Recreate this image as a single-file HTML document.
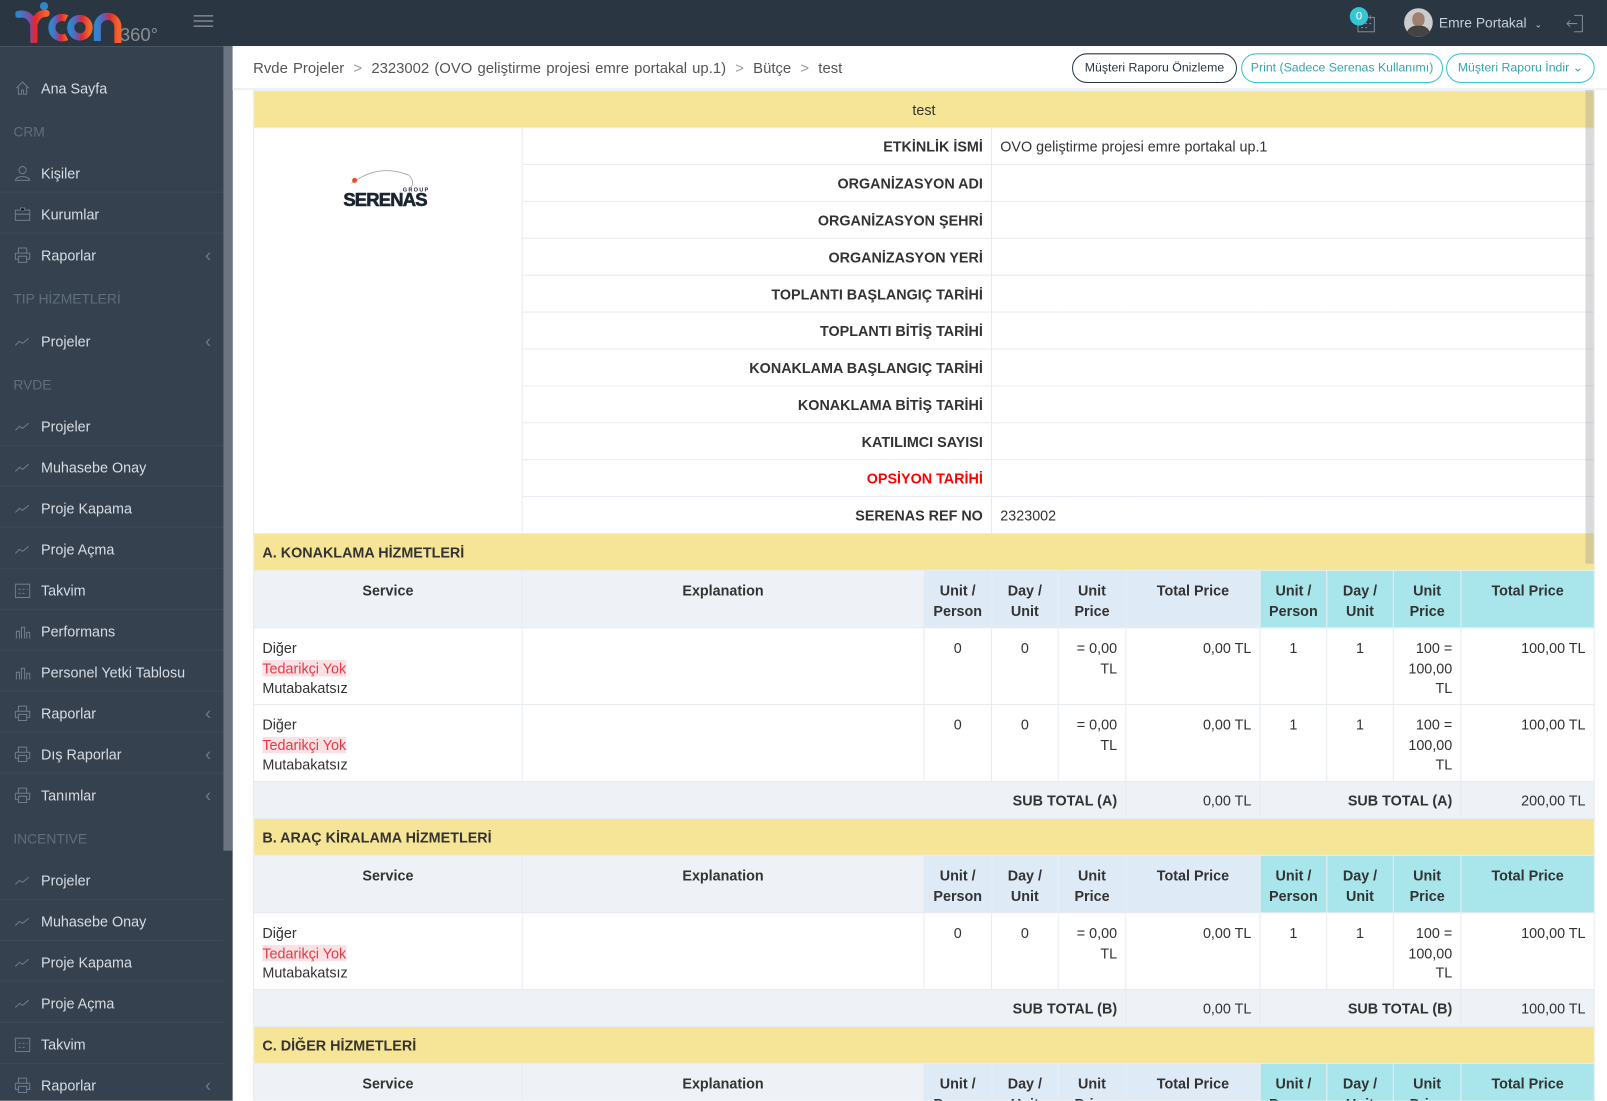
<!DOCTYPE html>
<html><head><meta charset="utf-8">
<style>
*{box-sizing:border-box;margin:0;padding:0}
html,body{width:1607px;height:1100px;overflow:hidden;background:#fff}
#w{position:absolute;left:0;top:0;width:1568px;height:1074px;overflow:hidden;transform:scale(1.02487);transform-origin:0 0;font-family:"Liberation Sans",sans-serif;font-size:13.5px;color:#333;background:#fff}
.top{position:absolute;left:0;top:0;width:1568px;height:45px;background:#2b3643}
.side{position:absolute;left:0;top:45px;width:227px;height:1040px;background:#364150}
.sbar{position:absolute;left:218px;top:45px;width:9px;height:785px;background:#6b7480}
.side .it{position:absolute;left:0;width:218px;height:40px;line-height:42px;color:#d6dce3;font-size:14px;padding-left:40px;border-bottom:1px solid #3d4957}
.side .it svg{position:absolute;left:14px;top:13px}
.side .it .ch{position:absolute;right:12px;top:0;color:#6d7986;font-size:18px}
.side .hd{position:absolute;left:13px;color:#5f6e7d;font-size:13.5px}
.crumb{position:absolute;left:227px;top:45px;width:1341px;height:43px;border-bottom:2px solid #eef1f5;background:#fff}
.crumb .t{position:absolute;left:20px;top:14px;color:#555;font-size:14.5px;word-spacing:1px}
.crumb .t span{color:#999;margin:0 9px}
.btn{position:absolute;top:7px;height:29px;border-radius:15px;border:1px solid #32c5d2;color:#32a5b0;font-size:12px;line-height:27px;text-align:center;background:#fff}
table{position:absolute;left:247px;top:88px;border-collapse:collapse;table-layout:fixed;width:1308px}
td{border:1px solid #e7ecf1;padding:0 8px;vertical-align:top;font-size:14px;line-height:19.5px}
.y td{background:#f7e597;height:36px;vertical-align:middle;font-weight:bold;padding-top:3px}
.inf td{height:36px;vertical-align:middle;padding-top:3px}
.lb{text-align:right;font-weight:bold}
.h td{font-weight:bold;text-align:center;height:56px;padding-top:10px}
.h .g{background:#eef1f5}.h .b{background:#dfeaf7}.h .c{background:#a9e6ec}
.r td{height:75px;padding-top:10px}
.n{text-align:center}.rt{text-align:right}
.red{color:#e43a45;background:#fbe1e3}
.st td{background:#eef1f5;height:36px;vertical-align:middle;text-align:right;padding-top:3px}
.vs{position:absolute;left:1547px;top:88px;width:8px;height:462px;background:rgba(150,150,150,.35)}
</style></head><body><div id="w">
<div class="top">
 <svg style="position:absolute;left:15px;top:2px" width="145" height="40" viewBox="0 0 145 40">
  <defs><linearGradient id="lg" x1="0" x2="1"><stop offset="0" stop-color="#2f86d0"/><stop offset=".4" stop-color="#7b4ea6"/><stop offset=".6" stop-color="#e3262d"/><stop offset="1" stop-color="#f0652a"/></linearGradient></defs>
  <circle cx="28" cy="4" r="4" fill="#2f86d0"/>
  <path d="M3 12 Q14 10 18 22 L18 38 M18 22 Q21 11 30 11" stroke="url(#lg)" stroke-width="7" fill="none" stroke-linecap="round"/>
  <path d="M50 16 A10 10 0 1 0 50 34" stroke="url(#lg)" stroke-width="7" fill="none"/>
  <circle cx="63" cy="25" r="9" stroke="url(#lg)" stroke-width="7" fill="none"/>
  <path d="M80 38 L80 24 A10 10 0 0 1 100 24 L100 40" stroke="url(#lg)" stroke-width="7" fill="none"/>
  <text x="102" y="38" font-family="Liberation Sans" font-size="18" fill="#8a8f96">360°</text>
 </svg>
 <div style="position:absolute;left:189px;top:15px;width:19px;height:1px;background:#aab;box-shadow:0 5px 0 #aab,0 10px 0 #aab"></div>
 <svg style="position:absolute;left:1323px;top:13px" width="20" height="20" viewBox="0 0 20 20"><rect x="2" y="4" width="16" height="14" fill="none" stroke="#7f8b99"/><path d="M6 2v4M14 2v4M5 10h2M9 10h2M13 10h2M5 14h2M9 14h2" stroke="#7f8b99"/></svg>
 <div style="position:absolute;left:1317px;top:7px;width:18px;height:18px;border-radius:9px;background:#36c6d3;color:#fff;font-size:11px;text-align:center;line-height:18px">0</div>
 <div style="position:absolute;left:1370px;top:8px;width:28px;height:28px;border-radius:14px;background:#ccc;overflow:hidden"><div style="margin:4px auto 0;width:12px;height:14px;border-radius:6px;background:#a08070"></div><div style="margin:-1px auto 0;width:24px;height:12px;border-radius:10px 10px 0 0;background:#444"></div></div>
 <div style="position:absolute;left:1404px;top:15px;color:#c6cfda;font-size:13.5px">Emre Portakal <span style="font-size:9px;margin-left:4px">&#8964;</span></div>
 <svg style="position:absolute;left:1527px;top:13px" width="20" height="20" viewBox="0 0 20 20"><path d="M9 2h8v16h-8M2 10h10M5 7l-3 3 3 3" stroke="#7f8b99" fill="none"/></svg>
</div>
<div class="side">
<div class="it" style="top:20px;border:0"><svg width="16" height="16" viewBox="0 0 16 16"><path d="M2 8L8 2l6 6M4 7v7h3v-4h2v4h3V7" stroke="#6f7c8a" fill="none"/></svg>Ana Sayfa</div>
<div class="hd" style="top:76px">CRM</div>
<div class="it" style="top:103px"><svg width="16" height="16"><circle cx="8" cy="5" r="3.5" stroke="#6f7c8a" fill="none"/><path d="M1 15c1-5 13-5 14 0z" stroke="#6f7c8a" fill="none"/></svg>Kişiler</div>
<div class="it" style="top:143px"><svg width="16" height="16"><rect x="1" y="4" width="14" height="10" stroke="#6f7c8a" fill="none"/><path d="M6 4V2h4v2M1 8h14" stroke="#6f7c8a"/></svg>Kurumlar</div>
<div class="it" style="top:183px;border:0"><svg width="16" height="16"><path d="M4 6V1h8v5M1 6h14v6h-3M4 12H1V6M4 9h8v6H4z" stroke="#6f7c8a" fill="none"/></svg>Raporlar<span class="ch">&lsaquo;</span></div>
<div class="hd" style="top:239px">TIP HİZMETLERİ</div>
<div class="it" style="top:267px;border:0"><svg width="16" height="16"><path d="M1 12l4-4 3 2 6-5" stroke="#6f7c8a" fill="none"/></svg>Projeler<span class="ch">&lsaquo;</span></div>
<div class="hd" style="top:323px">RVDE</div>
<div class="it" style="top:350px"><svg width="16" height="16"><path d="M1 12l4-4 3 2 6-5" stroke="#6f7c8a" fill="none"/></svg>Projeler</div>
<div class="it" style="top:390px"><svg width="16" height="16"><path d="M1 12l4-4 3 2 6-5" stroke="#6f7c8a" fill="none"/></svg>Muhasebe Onay</div>
<div class="it" style="top:430px"><svg width="16" height="16"><path d="M1 12l4-4 3 2 6-5" stroke="#6f7c8a" fill="none"/></svg>Proje Kapama</div>
<div class="it" style="top:470px"><svg width="16" height="16"><path d="M1 12l4-4 3 2 6-5" stroke="#6f7c8a" fill="none"/></svg>Proje Açma</div>
<div class="it" style="top:510px"><svg width="16" height="16"><rect x="1" y="2" width="14" height="13" stroke="#6f7c8a" fill="none"/><path d="M4 7h2M8 7h2M12 7h1M4 11h2M8 11h2" stroke="#6f7c8a"/></svg>Takvim</div>
<div class="it" style="top:550px"><svg width="16" height="16"><path d="M2 15V8h3v7M7 15V4h3v11M12 15V9h3v6" stroke="#6f7c8a" fill="none"/></svg>Performans</div>
<div class="it" style="top:590px"><svg width="16" height="16"><path d="M2 15V8h3v7M7 15V4h3v11M12 15V9h3v6" stroke="#6f7c8a" fill="none"/></svg>Personel Yetki Tablosu</div>
<div class="it" style="top:630px"><svg width="16" height="16"><path d="M4 6V1h8v5M1 6h14v6h-3M4 12H1V6M4 9h8v6H4z" stroke="#6f7c8a" fill="none"/></svg>Raporlar<span class="ch">&lsaquo;</span></div>
<div class="it" style="top:670px"><svg width="16" height="16"><path d="M4 6V1h8v5M1 6h14v6h-3M4 12H1V6M4 9h8v6H4z" stroke="#6f7c8a" fill="none"/></svg>Dış Raporlar<span class="ch">&lsaquo;</span></div>
<div class="it" style="top:710px;border:0"><svg width="16" height="16"><path d="M4 6V1h8v5M1 6h14v6h-3M4 12H1V6M4 9h8v6H4z" stroke="#6f7c8a" fill="none"/></svg>Tanımlar<span class="ch">&lsaquo;</span></div>
<div class="hd" style="top:766px">INCENTIVE</div>
<div class="it" style="top:793px"><svg width="16" height="16"><path d="M1 12l4-4 3 2 6-5" stroke="#6f7c8a" fill="none"/></svg>Projeler</div>
<div class="it" style="top:833px"><svg width="16" height="16"><path d="M1 12l4-4 3 2 6-5" stroke="#6f7c8a" fill="none"/></svg>Muhasebe Onay</div>
<div class="it" style="top:873px"><svg width="16" height="16"><path d="M1 12l4-4 3 2 6-5" stroke="#6f7c8a" fill="none"/></svg>Proje Kapama</div>
<div class="it" style="top:913px"><svg width="16" height="16"><path d="M1 12l4-4 3 2 6-5" stroke="#6f7c8a" fill="none"/></svg>Proje Açma</div>
<div class="it" style="top:953px"><svg width="16" height="16"><rect x="1" y="2" width="14" height="13" stroke="#6f7c8a" fill="none"/><path d="M4 7h2M8 7h2M12 7h1M4 11h2M8 11h2" stroke="#6f7c8a"/></svg>Takvim</div>
<div class="it" style="top:993px"><svg width="16" height="16"><path d="M4 6V1h8v5M1 6h14v6h-3M4 12H1V6M4 9h8v6H4z" stroke="#6f7c8a" fill="none"/></svg>Raporlar<span class="ch">&lsaquo;</span></div>
</div>
<div class="sbar"></div>
<div class="crumb">
 <div class="t">Rvde Projeler<span>&gt;</span>2323002 (OVO geliştirme projesi emre portakal up.1)<span>&gt;</span>Bütçe<span>&gt;</span>test</div>
 <div class="btn" style="left:819px;width:161px;border-color:#2b3643;color:#2b3643">Müşteri Raporu Önizleme</div>
 <div class="btn" style="left:984px;width:197px">Print (Sadece Serenas Kullanımı)</div>
 <div class="btn" style="left:1184px;width:145px">Müşteri Raporu İndir &#8964;</div>
</div>
<table>
<colgroup><col style="width:262px"><col style="width:392px"><col style="width:66px"><col style="width:65px"><col style="width:66px"><col style="width:131px"><col style="width:65px"><col style="width:65px"><col style="width:66px"><col style="width:130px"></colgroup>
<tr class="y"><td colspan="10" style="text-align:center;font-weight:normal">test</td></tr>
<tr class="inf"><td rowspan="11" style="vertical-align:top;padding-top:36px;text-align:center">
<svg width="100" height="50" viewBox="0 0 100 50"><path d="M14 18 Q40 -2 70 10" stroke="#999" stroke-width=".7" fill="none"/><path d="M70 10 Q76 16 72 22" stroke="#999" stroke-width=".7" fill="none"/><circle cx="17" cy="15" r="2.4" fill="#f04a23"/><text x="64" y="26" font-family="Liberation Sans" font-size="5.5" font-weight="bold" fill="#1b2430" letter-spacing="1.2">GROUP</text><text x="6" y="40" font-family="Liberation Sans" font-size="18" font-weight="900" fill="#1b2430" letter-spacing="-.8" stroke="#1b2430" stroke-width=".6">SERENAS</text></svg>
</td><td colspan="2" class="lb">ETKİNLİK İSMİ</td><td colspan="7">OVO geliştirme projesi emre portakal up.1</td></tr>
<tr class="inf"><td colspan="2" class="lb">ORGANİZASYON ADI</td><td colspan="7"></td></tr>
<tr class="inf"><td colspan="2" class="lb">ORGANİZASYON ŞEHRİ</td><td colspan="7"></td></tr>
<tr class="inf"><td colspan="2" class="lb">ORGANİZASYON YERİ</td><td colspan="7"></td></tr>
<tr class="inf"><td colspan="2" class="lb">TOPLANTI BAŞLANGIÇ TARİHİ</td><td colspan="7"></td></tr>
<tr class="inf"><td colspan="2" class="lb">TOPLANTI BİTİŞ TARİHİ</td><td colspan="7"></td></tr>
<tr class="inf"><td colspan="2" class="lb">KONAKLAMA BAŞLANGIÇ TARİHİ</td><td colspan="7"></td></tr>
<tr class="inf"><td colspan="2" class="lb">KONAKLAMA BİTİŞ TARİHİ</td><td colspan="7"></td></tr>
<tr class="inf"><td colspan="2" class="lb">KATILIMCI SAYISI</td><td colspan="7"></td></tr>
<tr class="inf"><td colspan="2" class="lb" style="color:#f00">OPSİYON TARİHİ</td><td colspan="7"></td></tr>
<tr class="inf"><td colspan="2" class="lb">SERENAS REF NO</td><td colspan="7">2323002</td></tr>
<tr class="y"><td colspan="10">A. KONAKLAMA HİZMETLERİ</td></tr>
<tr class="h"><td class="g">Service</td><td class="g">Explanation</td><td class="b">Unit / Person</td><td class="b">Day / Unit</td><td class="b">Unit Price</td><td class="b">Total Price</td><td class="c">Unit / Person</td><td class="c">Day / Unit</td><td class="c">Unit Price</td><td class="c">Total Price</td></tr>
<tr class="r"><td>Diğer<br><span class="red">Tedarikçi Yok</span><br>Mutabakatsız</td><td></td><td class="n">0</td><td class="n">0</td><td class="rt">= 0,00 TL</td><td class="rt">0,00 TL</td><td class="n">1</td><td class="n">1</td><td class="rt">100 = 100,00 TL</td><td class="rt">100,00 TL</td></tr>
<tr class="r"><td>Diğer<br><span class="red">Tedarikçi Yok</span><br>Mutabakatsız</td><td></td><td class="n">0</td><td class="n">0</td><td class="rt">= 0,00 TL</td><td class="rt">0,00 TL</td><td class="n">1</td><td class="n">1</td><td class="rt">100 = 100,00 TL</td><td class="rt">100,00 TL</td></tr>
<tr class="st"><td colspan="5"><b>SUB TOTAL (A)</b></td><td>0,00 TL</td><td colspan="3"><b>SUB TOTAL (A)</b></td><td>200,00 TL</td></tr>
<tr class="y"><td colspan="10">B. ARAÇ KİRALAMA HİZMETLERİ</td></tr>
<tr class="h"><td class="g">Service</td><td class="g">Explanation</td><td class="b">Unit / Person</td><td class="b">Day / Unit</td><td class="b">Unit Price</td><td class="b">Total Price</td><td class="c">Unit / Person</td><td class="c">Day / Unit</td><td class="c">Unit Price</td><td class="c">Total Price</td></tr>
<tr class="r"><td>Diğer<br><span class="red">Tedarikçi Yok</span><br>Mutabakatsız</td><td></td><td class="n">0</td><td class="n">0</td><td class="rt">= 0,00 TL</td><td class="rt">0,00 TL</td><td class="n">1</td><td class="n">1</td><td class="rt">100 = 100,00 TL</td><td class="rt">100,00 TL</td></tr>
<tr class="st"><td colspan="5"><b>SUB TOTAL (B)</b></td><td>0,00 TL</td><td colspan="3"><b>SUB TOTAL (B)</b></td><td>100,00 TL</td></tr>
<tr class="y"><td colspan="10">C. DİĞER HİZMETLERİ</td></tr>
<tr class="h"><td class="g">Service</td><td class="g">Explanation</td><td class="b">Unit / Person</td><td class="b">Day / Unit</td><td class="b">Unit Price</td><td class="b">Total Price</td><td class="c">Unit / Person</td><td class="c">Day / Unit</td><td class="c">Unit Price</td><td class="c">Total Price</td></tr>
</table>
<div class="vs"></div>
</div></body></html>
